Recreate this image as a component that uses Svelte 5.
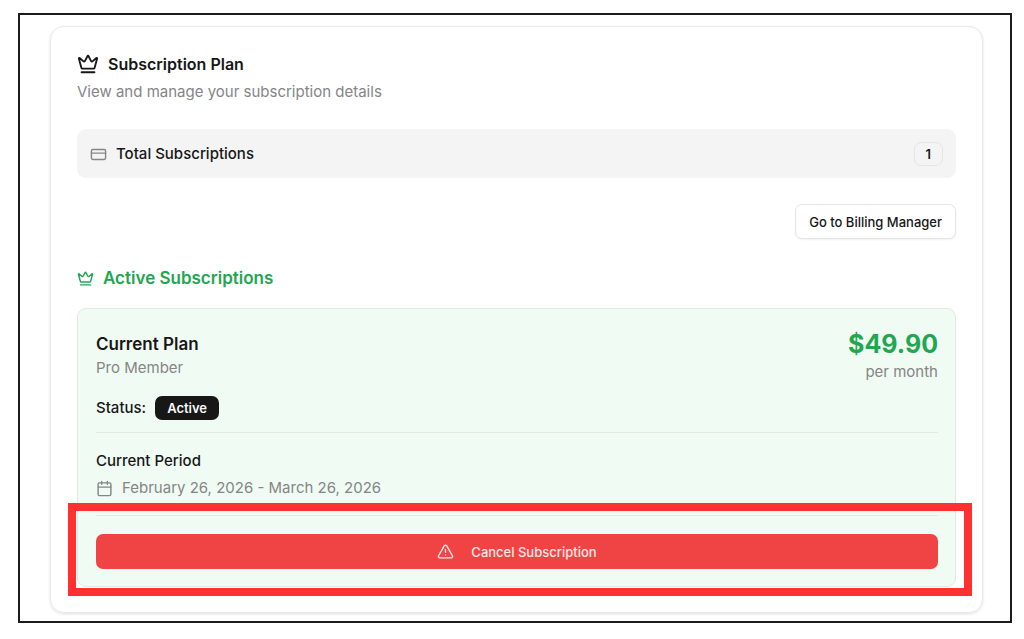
<script>
  const subscriptions = [
    {
      plan: "Pro Member",
      price: "$49.90",
      interval: "per month",
      status: "Active",
      start: "February 26, 2026",
      end: "March 26, 2026",
    },
  ];

  const total = $derived(subscriptions.length);
</script>

{#snippet crown()}
  <svg class="icon" viewBox="0 0 24 24" aria-hidden="true">
    <path d="M11.562 3.266a.5.5 0 0 1 .876 0L15.39 8.87a1 1 0 0 0 1.516.294L21.183 5.5a.5.5 0 0 1 .798.519l-2.834 10.246a1 1 0 0 1-.956.734H5.81a1 1 0 0 1-.957-.734L2.02 6.02a.5.5 0 0 1 .798-.519l4.276 3.664a1 1 0 0 0 1.516-.294z" />
    <path d="M5 21h14" />
  </svg>
{/snippet}

<main class="frame">
  <section class="card">
    <header class="card-header">
      <h1>{@render crown()}Subscription Plan</h1>
      <p class="muted">View and manage your subscription details</p>
    </header>

    <div class="total">
      <svg class="icon" viewBox="0 0 24 24" aria-hidden="true">
        <rect x="2" y="5" width="20" height="14" rx="2" />
        <path d="M2 10h20" />
      </svg>
      <span>Total Subscriptions</span>
      <span class="count">{total}</span>
    </div>

    <button class="billing" type="button">Go to Billing Manager</button>

    <h2>{@render crown()}Active Subscriptions</h2>

    {#each subscriptions as sub}
      <article class="plan">
        <div class="plan-head">
          <div>
            <h3>Current Plan</h3>
            <p class="muted">{sub.plan}</p>
          </div>
          <div class="cost">
            <p class="price">{sub.price}</p>
            <p class="muted">{sub.interval}</p>
          </div>
        </div>

        <div class="status">
          <span>Status:</span>
          <span class="badge">{sub.status}</span>
        </div>

        <div class="period">
          <h4>Current Period</h4>
          <p class="muted dates">
            <svg class="icon" viewBox="0 0 24 24" aria-hidden="true">
              <path d="M8 2v4M16 2v4M3 10h18" />
              <rect x="3" y="4" width="18" height="18" rx="2" />
            </svg>
            {sub.start} - {sub.end}
          </p>
        </div>

        <div class="actions">
          <button class="cancel" type="button">
            <svg class="icon" viewBox="0 0 24 24" aria-hidden="true">
              <path d="m21.73 18-8-14a2 2 0 0 0-3.48 0l-8 14A2 2 0 0 0 4 21h16a2 2 0 0 0 1.73-3" />
              <path d="M12 9v4M12 17h.01" />
            </svg>
            Cancel Subscription
          </button>
        </div>
      </article>
    {/each}
  </section>
</main>

<style>
  :global(body) {
    background: #ffffff;
  }
  .frame {
    margin: 13px 12px 16px 18px;
    padding: 11px 27px 8px 30px;
    border: 2px solid #1c1c1c;
    font-family: Inter, "Liberation Sans", sans-serif;
    font-size: 15px;
    line-height: 22px;
    color: #171717;
  }
  h1, h2, h3, h4, p {
    margin: 0;
  }
  button {
    font: inherit;
    cursor: pointer;
  }
  .icon {
    flex: none;
    width: 17px;
    height: 17px;
    fill: none;
    stroke: currentColor;
    stroke-width: 2;
    stroke-linecap: round;
    stroke-linejoin: round;
  }
  .muted {
    color: #858585;
  }
  .card {
    display: flex;
    flex-direction: column;
    padding: 26px 26px 25px;
    border: 1px solid #e8e8e8;
    border-radius: 14px;
    box-shadow: 0 1px 3px rgba(0, 0, 0, 0.12);
  }
  .card-header {
    display: flex;
    flex-direction: column;
    gap: 6px;
    margin-bottom: 26px;
  }
  h1 {
    display: flex;
    align-items: center;
    gap: 9px;
    font-size: 16px;
    font-weight: 600;
    line-height: 22px;
  }
  h1 .icon {
    width: 22px;
    height: 22px;
  }
  .total {
    display: flex;
    align-items: center;
    gap: 9px;
    padding: 13px 13px 12px;
    border-radius: 9px;
    background: #f4f4f4;
    font-weight: 500;
  }
  .total .icon {
    color: #858585;
  }
  .count {
    margin-left: auto;
    padding: 0 11px;
    border: 1px solid #e5e5e5;
    border-radius: 7px;
    font-size: 13px;
    font-weight: 600;
  }
  .billing {
    align-self: flex-end;
    height: 35px;
    margin: 26px 0;
    padding: 0 13px;
    border: 1px solid #e5e5e5;
    border-radius: 7px;
    background: #ffffff;
    box-shadow: 0 1px 2px rgba(0, 0, 0, 0.06);
    color: #171717;
    font-size: 13px;
    font-weight: 500;
  }
  h2 {
    display: flex;
    align-items: center;
    gap: 9px;
    margin-bottom: 17px;
    font-size: 17px;
    font-weight: 600;
    line-height: 26px;
    color: #22a650;
  }
  .plan {
    padding: 22px 17px 17px 18px;
    border: 1px solid #e2e9e4;
    border-radius: 9px;
    background: #f0fbf4;
  }
  .plan-head {
    display: flex;
    justify-content: space-between;
  }
  h3 {
    font-size: 17px;
    font-weight: 600;
    line-height: 26px;
  }
  .cost {
    text-align: right;
  }
  .price {
    margin-bottom: 4px;
    font-size: 25px;
    font-weight: 700;
    line-height: 26px;
    color: #22a650;
  }
  .status {
    display: flex;
    align-items: center;
    gap: 9px;
    margin: 13px 0 12px;
    font-weight: 500;
  }
  .badge {
    padding: 1px 12px;
    border-radius: 7px;
    background: #171717;
    color: #fafafa;
    font-size: 13px;
    font-weight: 600;
  }
  .period {
    padding: 17px 0 16px;
    border-top: 1px solid #e2e9e4;
  }
  h4 {
    margin-bottom: 5px;
    font-size: 15px;
    font-weight: 500;
  }
  .dates {
    display: flex;
    align-items: center;
    gap: 9px;
  }
  .actions {
    position: relative;
    padding-top: 18px;
    border-top: 1px solid #e2e9e4;
  }
  /* highlight box around the cancel action */
  .actions::after {
    content: "";
    position: absolute;
    inset: -13px -34px -27px -28px;
    border: 8px solid #ff3131;
    pointer-events: none;
  }
  .cancel {
    display: flex;
    align-items: center;
    justify-content: center;
    gap: 17px;
    width: 100%;
    height: 35px;
    padding: 0;
    border: 0;
    border-radius: 7px;
    background: #f04444;
    color: #fde8e8;
    font-size: 13px;
    font-weight: 500;
  }
</style>
